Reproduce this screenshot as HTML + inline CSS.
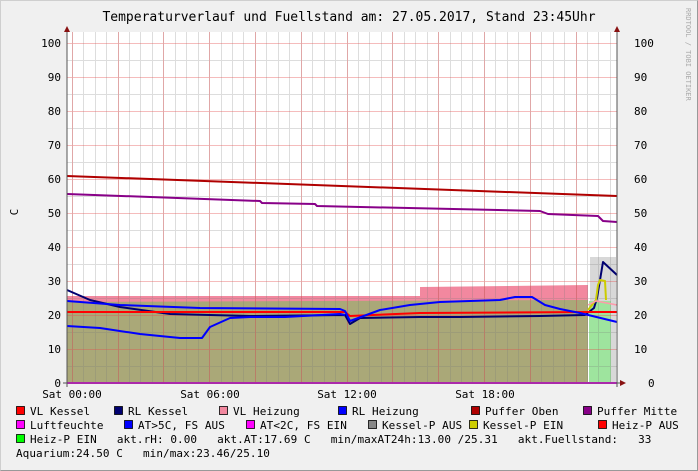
<!DOCTYPE html>
<html><head><meta charset="utf-8"><style>
html,body{margin:0;padding:0}
body{width:698px;height:471px;background:#f0f0f0;overflow:hidden;position:relative;font-family:"DejaVu Sans Mono","Liberation Mono",monospace}
.frame{position:absolute;left:0;top:0;width:696px;height:469px;border:1px solid #cfcfcf;border-right-color:#999;border-bottom-color:#999}
svg{position:absolute;left:0;top:0}
</style></head><body>
<div class="frame"></div>
<svg width="698" height="471" font-family="DejaVu Sans Mono, Liberation Mono, monospace">
<text x="349" y="21" font-size="13" text-anchor="middle" fill="#000">Temperaturverlauf und Fuellstand am: 27.05.2017, Stand 23:45Uhr</text>
<text transform="translate(686,8) rotate(90)" font-size="7" fill="#aaa">RRDTOOL / TOBI OETIKER</text>
<rect x="67" y="32" width="550" height="351" fill="#fff"/>
<path d="M67,296 L420,296 L420,287 L588,285 L588,383 L67,383Z" fill="#f2889f"/>
<path d="M67,302 L588,300 L588,383 L67,383Z" fill="#aaa878"/>
<rect x="590" y="257" width="26" height="126" fill="#d8d8d8"/>
<rect x="589" y="301" width="22" height="82" fill="#9ee49e"/>
<path stroke="rgba(120,120,120,0.25)" stroke-width="1" fill="none" d="M72.5,32V383M83.5,32V383M95.5,32V383M106.5,32V383M118.5,32V383M129.5,32V383M140.5,32V383M152.5,32V383M163.5,32V383M175.5,32V383M186.5,32V383M198.5,32V383M209.5,32V383M221.5,32V383M232.5,32V383M243.5,32V383M255.5,32V383M266.5,32V383M278.5,32V383M289.5,32V383M301.5,32V383M312.5,32V383M324.5,32V383M335.5,32V383M347.5,32V383M358.5,32V383M369.5,32V383M381.5,32V383M392.5,32V383M404.5,32V383M415.5,32V383M427.5,32V383M438.5,32V383M450.5,32V383M461.5,32V383M472.5,32V383M484.5,32V383M495.5,32V383M507.5,32V383M518.5,32V383M530.5,32V383M541.5,32V383M553.5,32V383M564.5,32V383M576.5,32V383M587.5,32V383M598.5,32V383M610.5,32V383M67,366.5H617M67,332.5H617M67,298.5H617M67,264.5H617M67,230.5H617M67,196.5H617M67,162.5H617M67,128.5H617M67,94.5H617M67,60.5H617"/>
<path stroke="rgba(230,80,80,0.38)" stroke-width="1" fill="none" d="M72.5,32V383M118.5,32V383M163.5,32V383M209.5,32V383M255.5,32V383M301.5,32V383M347.5,32V383M392.5,32V383M438.5,32V383M484.5,32V383M530.5,32V383M576.5,32V383M67,349.5H617M67,315.5H617M67,281.5H617M67,247.5H617M67,213.5H617M67,179.5H617M67,145.5H617M67,111.5H617M67,77.5H617M67,43.5H617"/>
<g fill="none" stroke-width="2" stroke-linejoin="round">
<path d="M67,176 L617,196" stroke="#b00000"/>
<path d="M67,194 L260,201 L262,203 L315,204 L317,206 L540,211 L548,214 L598,216 L603,221 L617,222" stroke="#880088"/>
<path d="M67,290 L90,300 L120,307 L170,314 L250,316 L345,315 L350,324 L360,318 L420,317 L460,317 L540,316 L585,315 L594,308 L597,298 L603,262 L617,275" stroke="#000070"/>
<path d="M67,312 L345,312 L350,316 L420,313 L588,312 L617,312" stroke="#ff0000"/>
<path d="M67,301 L120,305 L200,308 L340,309 L345,311 L350,321 L380,310 L410,305 L440,302 L470,301 L500,300 L515,297 L532,297 L545,305 L560,309 L580,313 L617,322" stroke="#0000ff"/>
<path d="M67,326 L100,328 L140,334 L180,338 L202,338 L210,327 L230,318 L250,317 L285,317 L340,314 L345,315" stroke="#0000ff"/>
<path d="M588,310 L596,300 L598,285 L600,280 L605,281 L606,300" stroke="#cccc00"/>
<path d="M588,305 L596,301 L617,305" stroke="#ff9aaa" stroke-width="1.5"/>
<path d="M67,383 L617,383" stroke="#ff00ff"/>
</g>
<line x1="67" y1="30" x2="67" y2="387" stroke="#555"/>
<line x1="617" y1="30" x2="617" y2="387" stroke="#555"/>
<line x1="63" y1="383" x2="620" y2="383" stroke="#555"/>
<path d="M64,32 L67,26 L70,32Z M614,32 L617,26 L620,32Z M620,380 L626,383 L620,386Z" fill="#881111"/>
<g font-size="11" fill="#000">
<g text-anchor="end">
<text x="61" y="47">100</text><text x="61" y="81">90</text><text x="61" y="115">80</text><text x="61" y="149">70</text><text x="61" y="183">60</text><text x="61" y="217">50</text><text x="61" y="251">40</text><text x="61" y="285">30</text><text x="61" y="319">20</text><text x="61" y="353">10</text><text x="61" y="387">0</text>
</g>
<g>
<text x="634" y="47">100</text><text x="634" y="81">90</text><text x="634" y="115">80</text><text x="634" y="149">70</text><text x="634" y="183">60</text><text x="634" y="217">50</text><text x="634" y="251">40</text><text x="634" y="285">30</text><text x="634" y="319">20</text><text x="634" y="353">10</text><text x="648" y="387">0</text>
</g>
<text transform="translate(18,212) rotate(-90)" text-anchor="middle">C</text>
<g text-anchor="middle"><text x="72" y="398">Sat 00:00</text><text x="210" y="398">Sat 06:00</text><text x="347" y="398">Sat 12:00</text><text x="485" y="398">Sat 18:00</text></g>
</g>
<g font-size="11" fill="#000" stroke="none" letter-spacing="0.06">
<g stroke="#000" stroke-width="0.8">
<rect x="16.5" y="406.5" width="8" height="8" fill="#ff0000"/><rect x="114.5" y="406.5" width="8" height="8" fill="#000070"/><rect x="219.5" y="406.5" width="8" height="8" fill="#f2889f"/><rect x="338.5" y="406.5" width="8" height="8" fill="#0000ff"/><rect x="471.5" y="406.5" width="8" height="8" fill="#b00000"/><rect x="583.5" y="406.5" width="8" height="8" fill="#880088"/>
<rect x="16.5" y="420.5" width="8" height="8" fill="#ff00ff"/><rect x="124.5" y="420.5" width="8" height="8" fill="#0000ff"/><rect x="246.5" y="420.5" width="8" height="8" fill="#ff00ff"/><rect x="368.5" y="420.5" width="8" height="8" fill="#888"/><rect x="469.5" y="420.5" width="8" height="8" fill="#cccc00"/><rect x="598.5" y="420.5" width="8" height="8" fill="#ff0000"/>
<rect x="16.5" y="434.5" width="8" height="8" fill="#00ff00"/>
</g>
<text x="30" y="415">VL Kessel</text><text x="128" y="415">RL Kessel</text><text x="233" y="415">VL Heizung</text><text x="352" y="415">RL Heizung</text><text x="485" y="415">Puffer Oben</text><text x="597" y="415">Puffer Mitte</text>
<text x="30" y="429">Luftfeuchte</text><text x="138" y="429">AT&gt;5C, FS AUS</text><text x="260" y="429">AT&lt;2C, FS EIN</text><text x="382" y="429">Kessel-P AUS</text><text x="483" y="429">Kessel-P EIN</text><text x="612" y="429">Heiz-P AUS</text>
<text x="30" y="443" xml:space="preserve">Heiz-P EIN   akt.rH: 0.00   akt.AT:17.69 C   min/maxAT24h:13.00 /25.31   akt.Fuellstand:   33</text>
<text x="16" y="457" xml:space="preserve">Aquarium:24.50 C   min/max:23.46/25.10</text>
</g>
</svg>
</body></html>
